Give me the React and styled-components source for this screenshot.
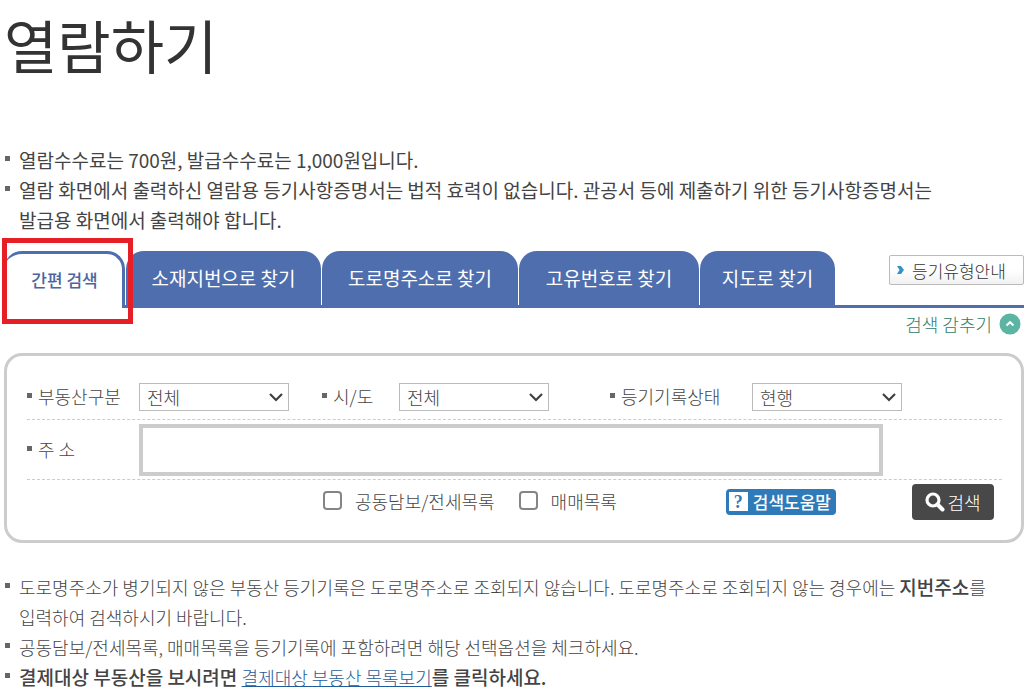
import React from 'react'
import styled, { createGlobalStyle } from 'styled-components'

const tabs = [
  { label: '소재지번으로 찾기', width: 195 },
  { label: '도로명주소로 찾기', width: 196 },
  { label: '고유번호로 찾기', width: 180 },
  { label: '지도로 찾기', width: 135 },
]

const Select = ({ id, options }) => (
  <SelectBox>
    <select id={id}>
      {options.map((option) => (
        <option key={option}>{option}</option>
      ))}
    </select>
    <svg width="14" height="10" viewBox="0 0 14 10" fill="none" aria-hidden="true">
      <path d="M1 2 L7 8 L13 2" stroke="#404040" strokeWidth="2.2" />
    </svg>
  </SelectBox>
)

const App = () => {
  return (
    <Page>
      <GlobalStyle />
      <Title>열람하기</Title>
      <Notes>
        <li>열람수수료는 700원, 발급수수료는 1,000원입니다.</li>
        <li>
          열람 화면에서 출력하신 열람용 등기사항증명서는 법적 효력이 없습니다. 관공서 등에 제출하기 위한 등기사항증명서는
          <br />
          발급용 화면에서 출력해야 합니다.
        </li>
      </Notes>

      <TabBar>
        <ActiveTab type="button">
          간편 검색
          <Highlight />
        </ActiveTab>
        {tabs.map((tab) => (
          <Tab type="button" key={tab.label} $width={tab.width}>{tab.label}</Tab>
        ))}
        <GuideButton type="button">
          <svg width="7" height="8" viewBox="0 0 7 8" aria-hidden="true">
            <path d="M0 0 H4 L7 4 L4 8 H0 L2.5 4 Z" fill="#3493c9" />
          </svg>
          등기유형안내
        </GuideButton>
      </TabBar>

      <FoldButton type="button">
        검색 감추기
        <svg width="22" height="22" viewBox="0 0 22 22" fill="none" aria-hidden="true">
          <circle cx="11" cy="11" r="10.5" fill="#5bb5a2" />
          <path d="M7.5 12.5 L11 9.3 L14.5 12.5" stroke="#fff" strokeWidth="2.2" />
        </svg>
      </FoldButton>

      <Panel>
        <FieldRow>
          <Label htmlFor="kind">부동산구분</Label>
          <Select id="kind" options={['전체', '토지', '건물', '집합건물']} />
          <Label htmlFor="city">시/도</Label>
          <Select id="city" options={['전체', '서울특별시', '부산광역시']} />
          <Label htmlFor="state">등기기록상태</Label>
          <Select id="state" options={['현행', '폐쇄']} />
        </FieldRow>
        <AddressRow>
          <Label htmlFor="address">주 소</Label>
          <AddressInput id="address" type="text" />
        </AddressRow>
        <ActionRow>
          <Check>
            <input type="checkbox" />
            공동담보/전세목록
          </Check>
          <Check>
            <input type="checkbox" />
            매매목록
          </Check>
          <HelpButton type="button">
            <b>?</b>
            검색도움말
          </HelpButton>
          <SearchButton type="submit">
            <svg width="20" height="20" viewBox="0 0 20 20" fill="none" aria-hidden="true">
              <circle cx="8" cy="8" r="6" stroke="#fff" strokeWidth="3.2" />
              <path d="M12.5 12.5 L17.5 17.5" stroke="#fff" strokeWidth="4" strokeLinecap="round" />
            </svg>
            검색
          </SearchButton>
        </ActionRow>
      </Panel>

      <Notes $thin>
        <li>
          도로명주소가 병기되지 않은 부동산 등기기록은 도로명주소로 조회되지 않습니다. 도로명주소로 조회되지 않는 경우에는 <strong>지번주소</strong>를
          <br />
          입력하여 검색하시기 바랍니다.
        </li>
        <li>공동담보/전세목록, 매매목록을 등기기록에 포함하려면 해당 선택옵션을 체크하세요.</li>
        <li>
          <strong>결제대상 부동산을 보시려면 </strong>
          <a href="#list">결제대상 부동산 목록보기</a>
          <strong>를 클릭하세요.</strong>
        </li>
      </Notes>
    </Page>
  )
}

const GlobalStyle = createGlobalStyle`
* {
  box-sizing: border-box;
}

body {
  margin: 0;
  background: #fff;
  overflow: hidden;
}

body, button, input, select {
  font-family: 'Noto Sans CJK KR', sans-serif;
  color: #444;
}

button {
  padding: 0;
  border: 0;
  cursor: pointer;
  white-space: nowrap;
}
`

const Page = styled.main`
padding: 4px 8px 0 4px;
`

const Title = styled.h1`
margin: 0 0 61px;
font-size: 58px;
font-weight: 400;
line-height: 80px;
color: #333;
`

const Notes = styled.ul`
list-style: none;
margin: 0;
padding: 0;
font-size: ${({ $thin }) => ($thin ? '18px' : '19px')};
font-weight: ${({ $thin }) => ($thin ? 300 : 400)};
line-height: 30px;
white-space: nowrap;

li {
  padding-left: 15px;
  background: linear-gradient(#666, #666) 1px 11px / 5px 5px no-repeat;
}

strong {
  font-size: 19px;
  font-weight: 500;
  line-height: 20px;
}

a {
  color: #1f5c99;
  text-underline-offset: 1px;
}
`

const TabBar = styled.nav`
display: flex;
gap: 1px;
margin-top: 16px;
border-bottom: 3px solid #4f6eae;
`

const Tab = styled.button`
width: ${({ $width }) => $width}px;
height: 54px;
padding-bottom: 1px;
border-radius: 18px 18px 0 0;
background: #4f6eae;
color: #fff;
font-size: 19px;
font-weight: 400;
`

const ActiveTab = styled.button`
position: relative;
width: 121px;
height: 57px;
margin-bottom: -3px;
padding: 0 0 4px 3px;
border: solid #4f6eae;
border-width: 3px 3px 0 0;
border-radius: 18px 18px 0 0;
background: #fff;
color: #4a659f;
font-size: 17px;
font-weight: 500;
`

const Highlight = styled.span`
position: absolute;
inset: -16px -11px -16px -2px;
border: 5px solid #e61e25;
`

const GuideButton = styled.button`
display: flex;
align-items: center;
gap: 8px;
width: 135px;
height: 30px;
margin: 4px 0 0 auto;
padding-left: 7px;
border: 1px solid #bbb;
border-radius: 2px;
background: linear-gradient(#fff 50%, #f1f1f1);
color: #333;
font-size: 17px;
font-weight: 300;
`

const FoldButton = styled.button`
display: flex;
align-items: center;
gap: 7px;
height: 30px;
margin: 1px 3px 0 auto;
background: none;
color: #2f8069;
font-size: 18px;
font-weight: 300;
`

const Panel = styled.form`
margin: 14px 0 29px;
padding: 18px 19px 17px 20px;
border: 3px solid #ccc;
border-radius: 18px;
`

const FieldRow = styled.div`
display: grid;
grid-template-columns: 112px 183px 77px 211px 142px 1fr;
align-items: center;
height: 46px;
border-bottom: 1px dashed #ccc;
`

const AddressRow = styled.div`
display: grid;
grid-template-columns: 112px 1fr;
align-items: center;
height: 60px;
padding-right: 119px;
border-bottom: 1px dashed #ccc;
`

const Label = styled.label`
display: flex;
align-items: center;
gap: 6px;
padding-bottom: 2px;
font-size: 18px;
font-weight: 300;

&::before {
  content: '';
  width: 5px;
  height: 5px;
  background: #666;
}
`

const SelectBox = styled.div`
position: relative;
width: 150px;

select {
  display: block;
  width: 100%;
  height: 28px;
  padding: 0 7px 2px;
  border: 1px solid #bbb;
  border-radius: 0;
  background: #fff;
  appearance: none;
  font-size: 18px;
  font-weight: 300;
}

svg {
  position: absolute;
  top: 9px;
  right: 6px;
  pointer-events: none;
}
`

const AddressInput = styled.input`
width: 100%;
height: 52px;
padding: 0 8px;
border: 4px solid #ccc;
font-size: 18px;
`

const ActionRow = styled.div`
display: flex;
align-items: center;
gap: 24px;
height: 43px;
padding: 0 8px 0 296px;
`

const Check = styled.label`
display: flex;
align-items: center;
gap: 13px;
padding-bottom: 2px;
font-size: 18px;
font-weight: 300;

input {
  appearance: none;
  width: 19px;
  height: 19px;
  margin: 0;
  border: 2px solid #858585;
  border-radius: 4px;

  &:checked {
    background: #4f6eae;
  }
}
`

const HelpButton = styled.button`
display: flex;
align-items: center;
gap: 5px;
height: 26px;
margin-left: auto;
padding: 0 5px 0 3px;
border-radius: 4px;
background: #2f7ab8;
color: #fff;
font-size: 17px;
font-weight: 500;

b {
  width: 19px;
  height: 19px;
  background: #fff;
  color: #2f7ab8;
  font: bold 18px/20px 'Liberation Serif', serif;
}
`

const SearchButton = styled.button`
display: flex;
align-items: center;
justify-content: center;
gap: 2px;
width: 82px;
height: 36px;
margin-left: 52px;
border-radius: 4px;
background: #484848;
color: #fff;
font-size: 18px;
font-weight: 300;
`

export default App
